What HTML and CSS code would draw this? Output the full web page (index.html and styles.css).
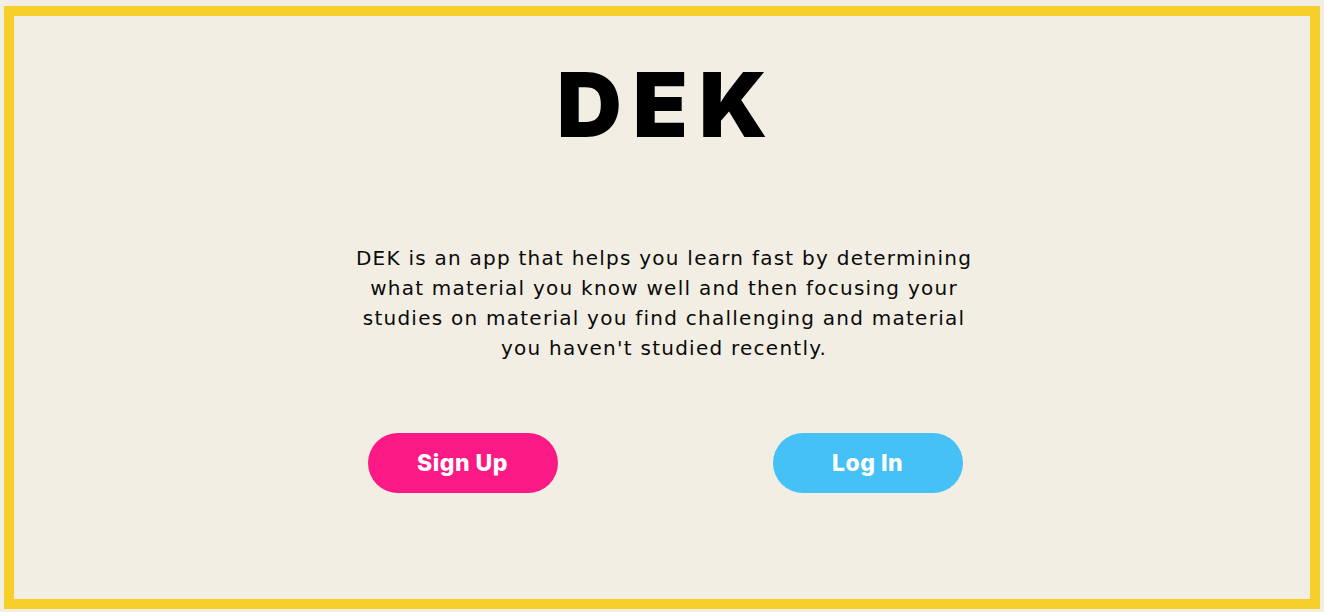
FILE: index.html
```html
<!DOCTYPE html>
<html lang="en">
<head>
<meta charset="utf-8">
<title>DEK</title>
<link rel="stylesheet" href="styles.css">
</head>
<body>
<main class="frame">
  <h1 class="logo">DEK</h1>
  <p class="intro">DEK is an app that helps you learn fast by determining<br>what material you know well and then focusing your<br>studies on material you find challenging and material<br>you haven't studied recently.</p>
  <div class="actions">
    <button class="btn btn-signup">Sign Up</button>
    <button class="btn btn-login">Log In</button>
  </div>
</main>
</body>
</html>
```

FILE: styles.css
```css
html, body {
  margin: 0;
  padding: 0;
  background: #f2eee3;
}
body {
  padding: 6px 4px 3px;
  height: 612px;
  box-sizing: border-box;
}
.frame {
  box-sizing: border-box;
  height: 603px;
  border: 10px solid #f6cf2a;
  background: #f2eee3;
  display: flex;
  flex-direction: column;
  align-items: center;
}
.logo {
  margin: 44px 0 0;
  font-family: Inter, "Liberation Sans", sans-serif;
  font-weight: 900;
  font-size: 90px;
  line-height: 90px;
  letter-spacing: 11px;
  color: #000;
  padding-left: 11px;
}
.intro {
  margin: 93px 0 0;
  font-family: "DejaVu Sans", "Liberation Sans", sans-serif;
  font-size: 20px;
  line-height: 30px;
  text-align: center;
  color: #0a0a0a;
  letter-spacing: 1.25px;
  padding-left: 4px;
}
.actions {
  margin-top: 70px;
  padding-left: 6px;
  display: flex;
  gap: 215px;
}
.btn {
  width: 190px;
  height: 60px;
  border: none;
  border-radius: 30px;
  color: #fff;
  font-family: Inter, "Liberation Sans", sans-serif;
  font-weight: 800;
  font-size: 23px;
  letter-spacing: 0.5px;
  cursor: pointer;
}
.btn-signup { background: #fb1a85; }
.btn-login { background: #45c1f6; }
```
